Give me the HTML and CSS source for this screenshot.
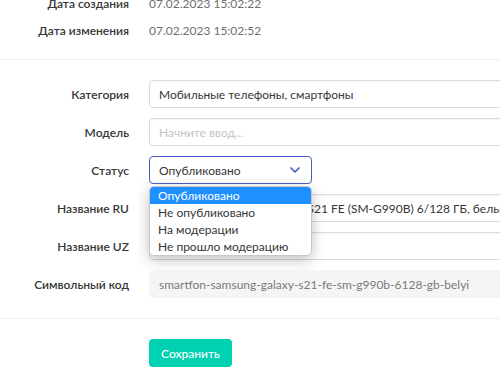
FILE: index.html
```html
<!DOCTYPE html>
<html lang="ru">
<head>
    <meta charset="UTF-8">
    <meta name="viewport" content="width=device-width, initial-scale=1.0">
    <title>Товар</title>
    <link rel="stylesheet" href="styles.css">
</head>
<body>
    <div class="page">
        <div class="meta">
            <div class="meta-row">
                <div class="label">Дата создания</div>
                <div class="meta-value">07.02.2023 15:02:22</div>
            </div>
            <div class="meta-row">
                <div class="label">Дата изменения</div>
                <div class="meta-value">07.02.2023 15:02:52</div>
            </div>
        </div>

        <form class="form">
            <div class="field">
                <label class="label">Категория</label>
                <div class="control">
                    <input class="input" type="text" value="Мобильные телефоны, смартфоны">
                </div>
            </div>
            <div class="field">
                <label class="label">Модель</label>
                <div class="control">
                    <input class="input" type="text" placeholder="Начните ввод...">
                </div>
            </div>
            <div class="field">
                <label class="label">Статус</label>
                <div class="control">
                    <div class="select is-focused">
                        <span>Опубликовано</span>
                        <svg class="chevron" width="10" height="6" viewBox="0 0 10 6">
                            <path d="M1 1l4 4 4-4" fill="none" stroke="#485fc7" stroke-width="1.7" stroke-linecap="round" stroke-linejoin="round"/>
                        </svg>
                        <ul class="options">
                            <li class="selected">Опубликовано</li>
                            <li>Не опубликовано</li>
                            <li>На модерации</li>
                            <li>Не прошло модерацию</li>
                        </ul>
                    </div>
                </div>
            </div>
            <div class="field">
                <label class="label">Название RU</label>
                <div class="control">
                    <input class="input" type="text" value="Смартфон Samsung Galaxy S21 FE (SM-G990B) 6/128 ГБ, белый">
                </div>
            </div>
            <div class="field">
                <label class="label">Название UZ</label>
                <div class="control">
                    <input class="input" type="text">
                </div>
            </div>
            <div class="field">
                <label class="label">Символьный код</label>
                <div class="control">
                    <input class="input" type="text" value="smartfon-samsung-galaxy-s21-fe-sm-g990b-6128-gb-belyi" disabled>
                </div>
            </div>
        </form>

        <div class="actions">
            <button class="button is-primary" type="button">Сохранить</button>
        </div>
    </div>
</body>
</html>
```

FILE: styles.css
```css
html, body {
    margin: 0;
    overflow: hidden;
}
body {
    font-family: Lato, "Noto Sans", sans-serif;
    font-size: 12px;
    color: #363636;
    background-color: #fff;
}
.page {
    width: 640px;
}
.meta {
    margin-top: -10px;
    padding-bottom: 15px;
    border-bottom: 1px solid #f0f0f0;
}
.meta-row {
    display: flex;
    align-items: center;
    gap: 20px;
    height: 27px;
}
.label {
    width: 129px;
    flex-shrink: 0;
    text-align: right;
    font-weight: 600;
    color: #363636;
}
.meta-value {
    color: #6f6f6f;
}
.form {
    display: flex;
    flex-direction: column;
    gap: 10px;
    padding: 20px 0 20px;
    border-bottom: 1px solid #f0f0f0;
}
.field {
    display: flex;
    align-items: center;
    gap: 20px;
}
.control {
    flex: 1;
}
.input {
    box-sizing: border-box;
    width: 100%;
    height: 28px;
    padding: 0 9px;
    font-family: inherit;
    font-size: 12px;
    color: #363636;
    border: 1px solid #dbdbdb;
    border-radius: 4px;
    box-shadow: inset 0 0.0625em 0.125em rgba(10, 10, 10, 0.05);
    outline: none;
}
.input::placeholder {
    color: #c4c4c4;
}
.input:disabled {
    background-color: #f5f5f5;
    border-color: #f5f5f5;
    color: #7a7a7a;
    box-shadow: none;
}
.select {
    position: relative;
    box-sizing: border-box;
    width: 163px;
    height: 28px;
    display: flex;
    align-items: center;
    justify-content: space-between;
    padding: 0 11px 0 9px;
    border: 1px solid #dbdbdb;
    border-radius: 4px;
}
.select.is-focused {
    border-color: #485fc7;
}
.options {
    position: absolute;
    top: 29px;
    left: -1px;
    width: 163px;
    margin: 0;
    padding: 0;
    list-style: none;
    background-color: #fff;
    border: 1px solid #c8c8c8;
    border-radius: 5px;
    box-sizing: border-box;
    overflow: hidden;
    box-shadow: 0 4px 14px rgba(0, 0, 0, 0.25);
}
.options li {
    height: 17px;
    line-height: 17px;
    padding: 0 8px;
    color: #363636;
}
.options li.selected {
    background-color: #1e90ff;
    color: #fff;
}
.actions {
    padding: 20px 0 0 149px;
}
.button {
    height: 28px;
    padding: 0 12px;
    font-family: inherit;
    font-size: 12px;
    font-weight: 500;
    border: none;
    border-radius: 4px;
    cursor: pointer;
}
.button.is-primary {
    background-color: #00d1b2;
    color: #fff;
}
```
